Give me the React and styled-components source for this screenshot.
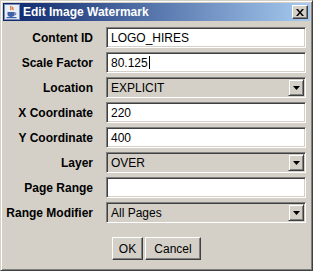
import React from 'react'
import styled, { createGlobalStyle } from 'styled-components';

const Global = createGlobalStyle`
  html, body {
    margin: 0;
    padding: 0;
    background: #d4d0c8;
  }
  * {
    box-sizing: border-box;
  }
`;

const Window = styled.div`
  width: 313px;
  height: 271px;
  background: #d4d0c8;
  border: 1px solid;
  border-color: #d4d0c8 #404040 #404040 #d4d0c8;
  box-shadow: inset 1px 1px #fff, inset -1px -1px #808080;
  padding: 2px;
  display: flex;
  flex-direction: column;
  font-family: "Liberation Sans", Arial, sans-serif;
`;

const TitleBar = styled.div`
  height: 18px;
  display: flex;
  align-items: center;
  padding: 0 2px 0 1px;
  background: linear-gradient(to right, #0a246a, #a6caf0);
`;

const TitleText = styled.span`
  flex: 1;
  margin-left: 3px;
  color: #fff;
  font-weight: bold;
  font-size: 12px;
  line-height: 18px;
`;

const CloseButton = styled.div`
  width: 16px;
  height: 14px;
  background: #d4d0c8;
  border: 1px solid;
  border-color: #fff #404040 #404040 #fff;
  box-shadow: inset -1px -1px #808080;
  display: flex;
  align-items: center;
  justify-content: center;
`;

const Form = styled.div`
  display: grid;
  grid-template-columns: 90px 200px;
  column-gap: 13px;
  row-gap: 4px;
  margin-top: 6px;
`;

const Label = styled.div`
  height: 21px;
  display: flex;
  align-items: center;
  justify-content: flex-end;
  font-size: 12px;
  font-weight: bold;
  color: #000;
`;

const Sunken = styled.div`
  height: 21px;
  border: 1px solid;
  border-color: #808080 #fff #fff #808080;
  box-shadow: inset 1px 1px #404040, inset -1px -1px #d4d0c8;
  background: ${p => (p.$combo ? '#d4d0c8' : '#fff')};
  display: flex;
  align-items: center;
  padding: ${p => (p.$combo ? '0 1px 0 4px' : '0 4px')};
  font-size: 12px;
  color: #000;
`;

const Value = styled.span`
  flex: 1;
  white-space: nowrap;
`;

const Caret = styled.span`
  display: inline-block;
  width: 1px;
  height: 13px;
  background: #000;
  vertical-align: -2px;
  margin-left: 1px;
`;

const ArrowButton = styled.div`
  width: 16px;
  height: 17px;
  background: #d4d0c8;
  border: 1px solid;
  border-color: #d4d0c8 #404040 #404040 #d4d0c8;
  box-shadow: inset 1px 1px #fff, inset -1px -1px #808080;
  display: flex;
  align-items: center;
  justify-content: center;
`;

const Buttons = styled.div`
  display: flex;
  justify-content: center;
  gap: 2px;
  margin-top: 14px;
`;

const Button = styled.div`
  width: ${p => p.$w}px;
  height: 23px;
  background: #d4d0c8;
  border: 1px solid;
  border-color: #fff #404040 #404040 #fff;
  box-shadow: inset -1px -1px #808080;
  display: flex;
  align-items: center;
  justify-content: center;
  font-size: 12px;
  color: #000;
`;

const JavaIcon = () => (
  <svg width="16" height="16" viewBox="0 0 16 16">
    <rect x="0.5" y="0.5" width="15" height="15" fill="#e8eef8" stroke="#7a8cb8" />
    <path d="M7 2c-1 1.5 1 2-0.5 4M9 3c-1 1.2 0.8 1.6-0.3 3" stroke="#e06010" strokeWidth="1.2" fill="none" />
    <path d="M3.5 8h7v2.5c0 1.5-1.5 2.5-3.5 2.5s-3.5-1-3.5-2.5z" fill="#4060a8" />
    <path d="M10.5 8.6c1.8 0 1.8 2.4 0 2.4" stroke="#4060a8" strokeWidth="1" fill="none" />
    <rect x="2.5" y="13" width="10" height="1.2" fill="#4060a8" />
  </svg>
);

const CloseGlyph = () => (
  <svg width="8" height="7" viewBox="0 0 8 7">
    <path d="M0 0h2l2 2.5 2-2.5h2l-3 3.5 3 3.5h-2l-2-2.5-2 2.5h-2l3-3.5z" fill="#000" />
  </svg>
);

const DownArrow = () => (
  <svg width="7" height="4" viewBox="0 0 7 4">
    <path d="M0 0h7l-3.5 4z" fill="#000" />
  </svg>
);

const rows = [
  { label: 'Content ID', value: 'LOGO_HIRES' },
  { label: 'Scale Factor', value: '80.125', caret: true },
  { label: 'Location', value: 'EXPLICIT', combo: true },
  { label: 'X Coordinate', value: '220' },
  { label: 'Y Coordinate', value: '400' },
  { label: 'Layer', value: 'OVER', combo: true },
  { label: 'Page Range', value: '' },
  { label: 'Range Modifier', value: 'All Pages', combo: true },
];

const App = () => {
  return (
    <>
      <Global />
      <Window>
        <TitleBar>
          <JavaIcon />
          <TitleText>Edit Image Watermark</TitleText>
          <CloseButton>
            <CloseGlyph />
          </CloseButton>
        </TitleBar>
        <Form>
          {rows.map(r => (
            <React.Fragment key={r.label}>
              <Label>{r.label}</Label>
              <Sunken $combo={r.combo}>
                <Value>
                  {r.value}
                  {r.caret && <Caret />}
                </Value>
                {r.combo && (
                  <ArrowButton>
                    <DownArrow />
                  </ArrowButton>
                )}
              </Sunken>
            </React.Fragment>
          ))}
        </Form>
        <Buttons>
          <Button $w={31}>OK</Button>
          <Button $w={56}>Cancel</Button>
        </Buttons>
      </Window>
    </>
  )
}

export default App
